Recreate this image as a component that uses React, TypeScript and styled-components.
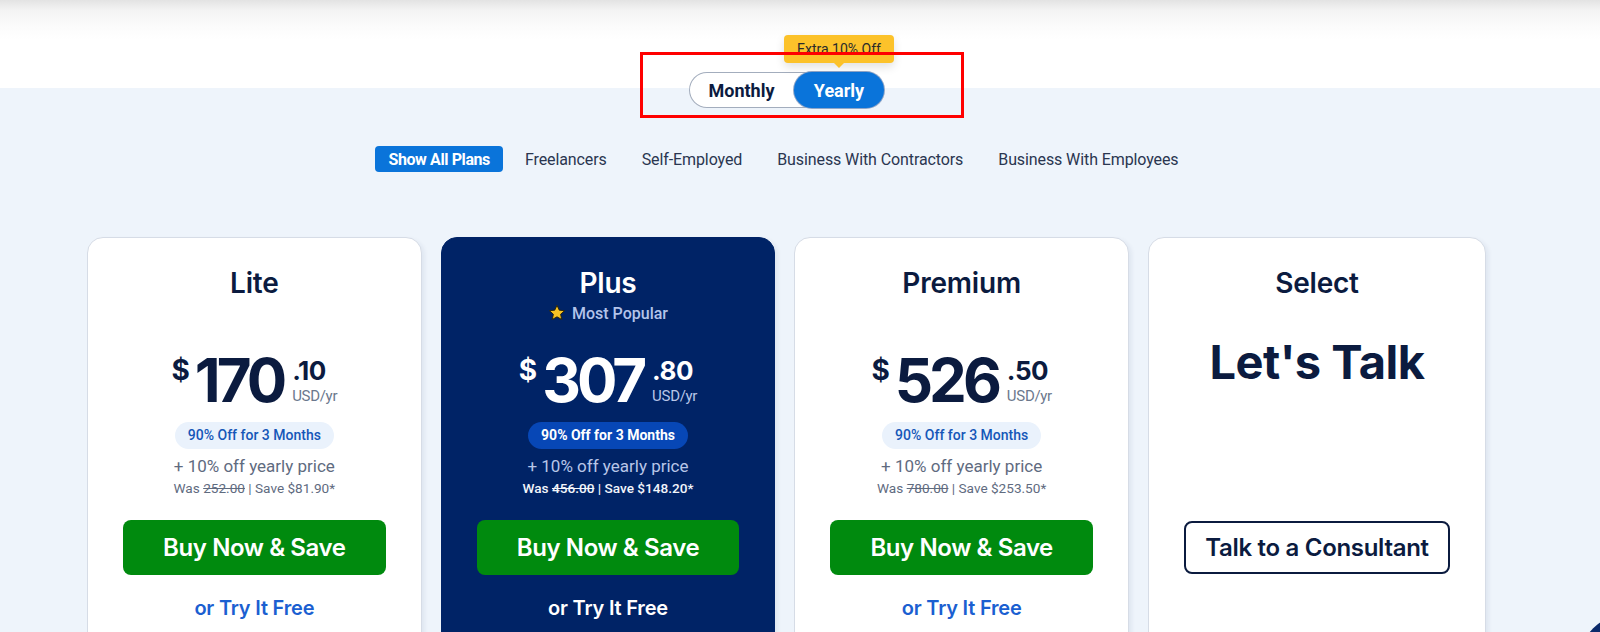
import React from "react";
import styled, { createGlobalStyle } from "styled-components";

const GlobalStyle = createGlobalStyle`
  html, body { margin: 0; padding: 0; overflow: hidden; }
  body { background: #eef4fb; font-family: Inter, "Liberation Sans", sans-serif; }
  * { box-sizing: border-box; }
`;

const Page = styled.div`
  width: 1600px;
  height: 632px;
  overflow: hidden;
  background: linear-gradient(
    to bottom,
    #e3e3e3 0px,
    #f3f3f3 10px,
    #fbfbfb 25px,
    #ffffff 40px,
    #ffffff 88px,
    #eef4fb 88px
  );
`;

const Content = styled.main`
  width: 1573px;
  display: flex;
  flex-direction: column;
  align-items: center;
  padding-top: 72px;
`;

const ToggleWrap = styled.div`
  position: relative;
`;

const Toggle = styled.div`
  display: flex;
  width: 195px;
  height: 36px;
  border-radius: 18px;
  background: #fff;
  box-shadow: inset 0 0 0 1px #a3adbd;
`;

const Seg = styled.button<{ $active?: boolean; $w: number }>`
  position: relative;
  width: ${(p) => p.$w}px;
  height: 36px;
  border: 0;
  border-radius: 18px;
  padding: 0;
  background: ${(p) => (p.$active ? "#0a74da" : "transparent")};
  color: ${(p) => (p.$active ? "#ffffff" : "#0b1b3f")};
  font-family: Roboto, "Noto Sans", sans-serif;
  font-weight: 700;
  font-size: 18px;
  box-shadow: ${(p) => (p.$active ? "0 0 0 1px #8fa6c8" : "none")};
`;

const Badge = styled.span`
  position: absolute;
  left: 50%;
  bottom: calc(100% + 9px);
  transform: translateX(-50%);
  width: 110px;
  height: 28px;
  border-radius: 4px;
  background: #fcc22a;
  color: #2a2a2a;
  font-family: Roboto, "Noto Sans", sans-serif;
  font-size: 14px;
  font-weight: 400;
  line-height: 28px;
  text-align: center;
  white-space: nowrap;
  box-shadow: 0 4px 10px rgba(0, 0, 0, 0.12);
  &::after {
    content: "";
    position: absolute;
    left: 50%;
    bottom: -5px;
    margin-left: -5px;
    border-left: 5px solid transparent;
    border-right: 5px solid transparent;
    border-top: 5px solid #fcc22a;
  }
`;

const Annotation = styled.div`
  position: absolute;
  left: -49px;
  right: -80px;
  top: -20px;
  bottom: -10px;
  border: 3px solid #ff0000;
  pointer-events: none;
  z-index: 2;
`;

const Tabs = styled.nav`
  display: flex;
  align-items: center;
  gap: 17px;
  margin-top: 38px;
  margin-right: 10px;
`;

const Tab = styled.button<{ $active?: boolean }>`
  height: 26px;
  padding: 0 ${(p) => (p.$active ? 13 : 9)}px;
  margin-right: ${(p) => (p.$active ? -4 : 0)}px;
  border: 0;
  border-radius: 4px;
  background: ${(p) => (p.$active ? "#0a74da" : "transparent")};
  color: ${(p) => (p.$active ? "#ffffff" : "#2a3650")};
  font-family: Roboto, "Noto Sans", sans-serif;
  font-size: 16px;
  font-weight: ${(p) => (p.$active ? 700 : 400)};
  letter-spacing: ${(p) => (p.$active ? "-0.4px" : "-0.1px")};
`;

const Cards = styled.section`
  display: grid;
  grid-template-columns: repeat(4, 1fr);
  gap: 19px;
  width: 1399px;
  margin-top: 65px;
`;

const Card = styled.article<{ $featured?: boolean }>`
  height: 430px;
  border-radius: 16px;
  border: 1px solid ${(p) => (p.$featured ? "#002366" : "#d6dce6")};
  background: ${(p) => (p.$featured ? "#002366" : "#ffffff")};
  color: ${(p) => (p.$featured ? "#ffffff" : "#0b1b3f")};
  padding: 27px 35px 0;
  display: flex;
  flex-direction: column;
  align-items: center;
  box-shadow: 3px 2px 4px rgba(15, 40, 90, 0.06);
`;

const Title = styled.h2`
  margin: 0;
  font-size: 28px;
  font-weight: 600;
  line-height: 36px;
  letter-spacing: -0.2px;
`;

const SubSlot = styled.div`
  height: 24px;
  display: flex;
  align-items: center;
  gap: 6px;
  color: #b3c4ea;
  font-family: Roboto, "Noto Sans", sans-serif;
  font-size: 16px;
  font-weight: 500;
`;

const PriceRow = styled.div`
  display: flex;
  align-items: flex-start;
  margin-top: 25px;
  height: 60px;
`;

const Currency = styled.span`
  font-size: 28px;
  font-weight: 700;
  line-height: 28px;
  margin-top: 6px;
  margin-right: 5px;
`;

const Whole = styled.span`
  font-size: 60px;
  font-weight: 700;
  line-height: 60px;
  letter-spacing: -4px;
`;

const CentsCol = styled.span`
  display: flex;
  flex-direction: column;
  margin-left: 9px;
`;

const Cents = styled.span`
  font-size: 26px;
  font-weight: 700;
  line-height: 26px;
  margin-top: 8px;
  letter-spacing: -0.5px;
`;

const Unit = styled.span<{ $featured?: boolean }>`
  font-family: Roboto, "Noto Sans", sans-serif;
  font-size: 15px;
  line-height: 16px;
  margin-top: 4px;
  letter-spacing: -0.3px;
  color: ${(p) => (p.$featured ? "#b8c6e8" : "#6b788d")};
`;

const Pill = styled.span<{ $featured?: boolean }>`
  margin-top: 12px;
  height: 27px;
  padding: 0 13px;
  border-radius: 14px;
  background: ${(p) => (p.$featured ? "#0747b6" : "#eaf2fc")};
  color: ${(p) => (p.$featured ? "#ffffff" : "#1557b8")};
  font-family: Roboto, "Noto Sans", sans-serif;
  font-size: 14px;
  font-weight: ${(p) => (p.$featured ? 700 : 500)};
  line-height: 27px;
  white-space: nowrap;
`;

const Discount = styled.div<{ $featured?: boolean }>`
  margin-top: 5px;
  font-family: Roboto, "Noto Sans", sans-serif;
  font-size: 17px;
  line-height: 24px;
  color: ${(p) => (p.$featured ? "#b8c6e8" : "#5f6b7f")};
`;

const Was = styled.div<{ $featured?: boolean }>`
  margin-top: 1px;
  font-family: Roboto, "Noto Sans", sans-serif;
  font-size: 13.6px;
  line-height: 18px;
  font-weight: ${(p) => (p.$featured ? 500 : 400)};
  color: ${(p) => (p.$featured ? "#f2f5fb" : "#5f6b7f")};
`;

const BuyButton = styled.button`
  margin-top: 23px;
  width: 100%;
  height: 55px;
  border: 0;
  border-radius: 8px;
  background: #008a0e;
  color: #ffffff;
  font-family: Inter, "Liberation Sans", sans-serif;
  font-size: 24px;
  font-weight: 600;
  letter-spacing: -0.4px;
`;

const TryFree = styled.a<{ $featured?: boolean }>`
  margin-top: 19px;
  font-size: 20px;
  font-weight: 600;
  line-height: 28px;
  letter-spacing: -0.2px;
  color: ${(p) => (p.$featured ? "#ffffff" : "#1b5fd1")};
  text-decoration: none;
`;

const BigTalk = styled.div`
  margin-top: 13px;
  font-size: 47px;
  font-weight: 700;
  line-height: 48px;
  letter-spacing: -0.5px;
`;

const OutlineButton = styled.button`
  margin-top: 135px;
  width: 266px;
  height: 53px;
  border: 2px solid #0b1b3f;
  border-radius: 8px;
  background: #ffffff;
  color: #0b1b3f;
  font-family: Inter, "Liberation Sans", sans-serif;
  font-size: 24px;
  font-weight: 600;
  letter-spacing: -0.3px;
`;

const ChatBubble = styled.div`
  position: fixed;
  right: -70px;
  bottom: -73px;
  width: 90px;
  height: 90px;
  border-radius: 50%;
  background: #0b2a6b;
`;

const Star = () => (
  <svg width="18" height="18" viewBox="0 0 24 24" aria-hidden="true">
    <path
      d="M12 1.8l3 6.4 7 .8-5.2 4.7 1.5 6.9L12 17.1l-6.3 3.5 1.5-6.9L2 9l7-.8z"
      fill="#f7c325"
      stroke="#2a2200"
      strokeWidth="1.2"
      strokeLinejoin="round"
    />
  </svg>
);

type Plan = {
  name: string;
  featured?: boolean;
  whole: string;
  cents: string;
  was: string;
  save: string;
};

const plans: Plan[] = [
  { name: "Lite", whole: "170", cents: ".10", was: "252.00", save: "$81.90" },
  { name: "Plus", featured: true, whole: "307", cents: ".80", was: "456.00", save: "$148.20" },
  { name: "Premium", whole: "526", cents: ".50", was: "780.00", save: "$253.50" },
];

const PlanCard = ({ plan }: { plan: Plan }) => (
  <Card $featured={plan.featured}>
    <Title>{plan.name}</Title>
    <SubSlot>
      {plan.featured && (
        <>
          <Star />
          <span>Most Popular</span>
        </>
      )}
    </SubSlot>
    <PriceRow>
      <Currency>$</Currency>
      <Whole>{plan.whole}</Whole>
      <CentsCol>
        <Cents>{plan.cents}</Cents>
        <Unit $featured={plan.featured}>USD/yr</Unit>
      </CentsCol>
    </PriceRow>
    <Pill $featured={plan.featured}>90% Off for 3 Months</Pill>
    <Discount $featured={plan.featured}>+ 10% off yearly price</Discount>
    <Was $featured={plan.featured}>
      Was <s>{plan.was}</s> | Save {plan.save}*
    </Was>
    <BuyButton>Buy Now &amp; Save</BuyButton>
    <TryFree $featured={plan.featured} href="#">
      or Try It Free
    </TryFree>
  </Card>
);

export default function App() {
  return (
    <>
      <GlobalStyle />
      <Page>
        <Content>
          <ToggleWrap>
            <Toggle>
              <Seg $w={105}>Monthly</Seg>
              <Seg $w={90} $active>
                Yearly
                <Badge>Extra 10% Off</Badge>
              </Seg>
            </Toggle>
            <Annotation />
          </ToggleWrap>
          <Tabs>
            <Tab $active>Show All Plans</Tab>
            <Tab>Freelancers</Tab>
            <Tab>Self-Employed</Tab>
            <Tab>Business With Contractors</Tab>
            <Tab>Business With Employees</Tab>
          </Tabs>
          <Cards>
            {plans.map((p) => (
              <PlanCard key={p.name} plan={p} />
            ))}
            <Card>
              <Title>Select</Title>
              <SubSlot />
              <BigTalk>Let's Talk</BigTalk>
              <OutlineButton>Talk to a Consultant</OutlineButton>
            </Card>
          </Cards>
        </Content>
        <ChatBubble />
      </Page>
    </>
  );
}
